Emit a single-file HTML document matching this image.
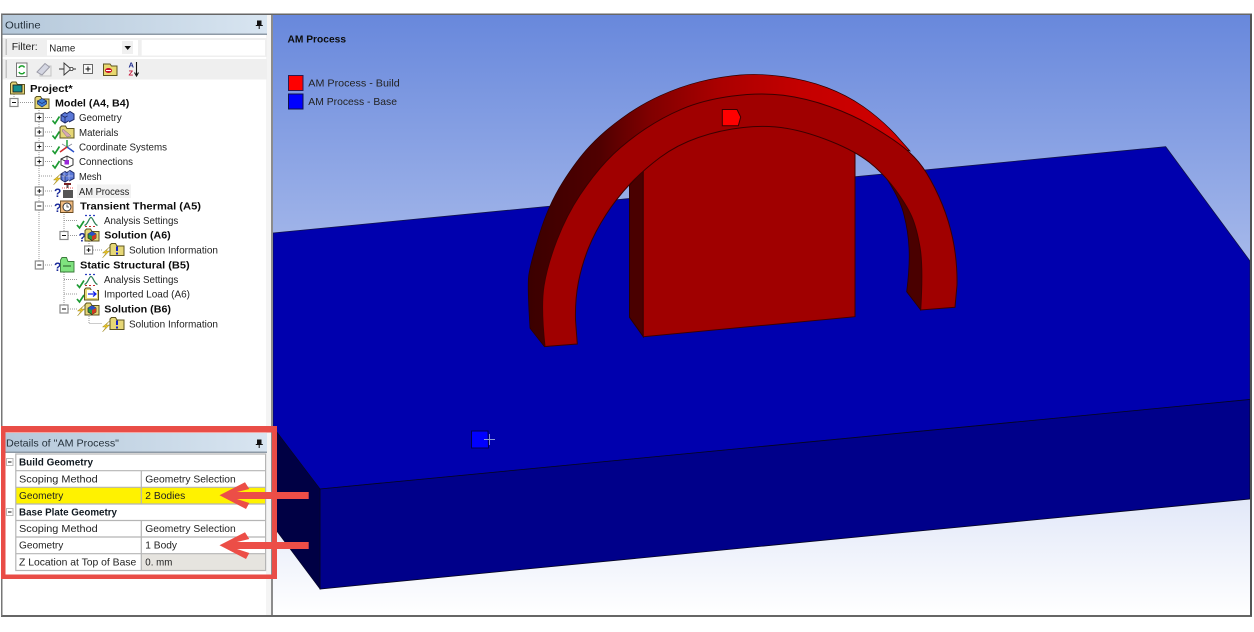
<!DOCTYPE html>
<html><head><meta charset="utf-8"><style>
html,body{margin:0;padding:0;background:#fff;width:1254px;height:632px;overflow:hidden}
svg{display:block;filter:blur(.3px)}
text{font-family:"Liberation Sans",sans-serif;font-size:10.5px;fill:#222}
.b{font-weight:bold;fill:#0c0c0c}
.q{font-weight:bold;font-size:12px;fill:#1a2a9a}
</style></head><body>
<svg width="1254" height="632" viewBox="0 0 1254 632" xmlns="http://www.w3.org/2000/svg">
<defs>
<linearGradient id="sky" gradientUnits="userSpaceOnUse" x1="0" y1="15" x2="0" y2="615"><stop offset="0" stop-color="#6888dc"/><stop offset="1" stop-color="#ffffff"/></linearGradient>
<linearGradient id="tb" x1="0" y1="0" x2="1" y2="0"><stop offset="0" stop-color="#b5c8da"/><stop offset="1" stop-color="#d8e5f1"/></linearGradient>
<linearGradient id="arc" gradientUnits="userSpaceOnUse" x1="530" y1="0" x2="900" y2="0"><stop offset="0" stop-color="#3c0000"/><stop offset=".19" stop-color="#500000"/><stop offset=".32" stop-color="#7f0000"/><stop offset=".51" stop-color="#aa0000"/><stop offset=".73" stop-color="#c40000"/><stop offset="1" stop-color="#d00000"/></linearGradient>
<g id="fold"><path d="M-7 -4.500V6H7V-3.500H0L-1.500 -6H-5.500Z" fill="#e6d777" stroke="#5c5420" stroke-width="1"/></g>
<g id="chk"><path d="M-3.500 0.500L-1 3.500L3.500 -3.500" fill="none" stroke="#1c9a32" stroke-width="1.700"/></g>
<g id="bolt"><path d="M3.500 -5L-3.500 1L0 1L-3.500 6L3.500 -1L0 -1Z" fill="#e9c52a" stroke="#8f7a10" stroke-width=".4"/></g>
<g id="cube"><path d="M-6 -2L-2 -4.500L2 -2V3.500L-2 6L-6 3.500Z" fill="#5b78d8" stroke="#1d2a66" stroke-width="1"/><path d="M-2 -.500V6M-6 -2L-2 .5L2 -2" fill="none" stroke="#1d2a66" stroke-width=".8"/><path d="M0 -3.500L3 -5.500L7 -3V2.500L2 5" fill="#5b78d8" stroke="#1d2a66" stroke-width="1"/></g>
<g id="plus"><rect x="-4" y="-4" width="8" height="8" fill="#fff" stroke="#8a8a8a" stroke-width="1.200"/><path d="M-2 0H2M0 -2V2" stroke="#111"/></g>
<g id="minus"><rect x="-4" y="-4" width="8" height="8" fill="#fff" stroke="#8a8a8a" stroke-width="1.200"/><path d="M-2 0H2" stroke="#111"/></g>
<g id="ana"><path d="M-6.500 5C-3 4 -2 -3 0 -3C2 -3 3 4 6.500 5" fill="none" stroke="#2d7f55" stroke-width="1.200"/><path d="M-6 -5H6" stroke="#2a3ec0" stroke-dasharray="2 2" stroke-width="1.200"/><path d="M-6 6H6" stroke="#c03030" stroke-dasharray="2 2"/></g>
<g id="sol"><use href="#fold"/><path d="M-4 -1L0 -3.500L4 -1V3L0 5.500L-4 3Z" fill="#2c9a3c" stroke="#222" stroke-width=".7"/><path d="M0 1L4 -1V3L0 5.500Z" fill="#d03a20"/><path d="M-4 -1L0 -3.500L4 -1L0 1Z" fill="#2a50c8"/></g>
<g id="info"><use href="#fold"/><path d="M0 -3V1.500M0 3V5" stroke="#1522c8" stroke-width="2"/></g>
</defs>

<rect width="1254" height="632" fill="#fff"/>
<!-- viewport -->
<rect x="272" y="14" width="979" height="602" fill="url(#sky)"/>
<path d="M273 233L1165.700 146.700L1250 261V399.500L320 489L273 427Z" fill="#0000ae" stroke="#10124a" stroke-width=".8"/>
<path d="M320 489L1250 399.500V499L320 589Z" fill="#00008a" stroke="#050520" stroke-width=".8"/>
<path d="M273 427L320 489V589L273 526Z" fill="#000044" stroke="#050520" stroke-width=".6"/>

<!-- right inner side of arch -->
<path d="M883 173Q900 198 904 215Q908.300 231.700 909 248Q910 265 906.700 291.700L920.700 310L930 250L900 180Z" fill="#4a0000" stroke="#2a0000" stroke-width=".8"/>
<!-- block -->
<path d="M629.500 185L643.300 170V336.700L629.500 317.300Z" fill="#4a0000" stroke="#2a0000" stroke-width="1"/>
<path d="M643.300 120H855V316.700L643.300 336.700Z" fill="#a00000" stroke="#3c0000" stroke-width="1"/>
<!-- arch side -->
<path d="M530 328.300Q527.300 286.700 528.650 275.850Q530 265 539.150 235Q548.300 205 562.500 182.500Q576.700 160 590 145.850Q603.300 131.700 621.650 118.350Q640 105 660 95.850Q680 86.700 700 81.700Q720 76.700 740 75Q760 73.300 783.350 76.650Q806.700 80 826.700 87.500Q846.700 95 863.350 106.650Q880 118.300 895 134L910 151L760 110L600 180L555 270L560 345L544.500 346.700Z" fill="url(#arc)" stroke="#2a0000" stroke-width=".7"/>
<!-- arch front -->
<path d="M545 346.500Q540.700 306.700 544 285.850Q547.300 265 557 240Q566.700 215 580 195Q593.300 175 606.650 160.850Q620 146.700 640 132.500Q660 118.300 681.650 109.150Q703.300 100 731.650 96.150Q760 92.300 783.350 95.300Q806.700 98.300 829.850 106.650Q853 115 869.850 125Q886.700 135 898.350 143.350Q910 151.700 918.350 161.700Q926.700 171.700 935 188.350Q943.300 205 948.300 221.500Q953.300 238 955.300 254Q957.300 270 957 285L955 307.300L920.700 310Q923.300 266.700 920 247.350Q916.700 228 911.700 216.500Q906.700 205 895 189.150Q883.300 173.300 869.150 162.150Q855 151 830.850 141.350Q806.700 131.700 786.700 128.350Q766.700 125 743.350 127.500Q720 130 698.350 137.500Q676.700 145 660 157.500Q643.300 170 630 184Q616.700 198 605.850 214.850Q595 231.700 588.350 248.350Q581.700 265 578.350 282.500Q575 300 575.500 320L577.300 344Z" fill="#a00000" stroke="#3c0000" stroke-width="1"/>
<!-- marker -->
<path d="M722.300 109.500H737L740.700 117L738.300 125.700H722.300Z" fill="#ff0000" stroke="#3c0000" stroke-width="1"/>
<path d="M471.500 431H488L488.500 448H471.500Z" fill="#0000ff" stroke="#000050" stroke-width="1"/>
<path d="M484 439.500H495M489.500 434V445" stroke="#8c9cd8" stroke-width=".9"/>

<text class="b" x="287.500" y="42.300" textLength="58.500" lengthAdjust="spacingAndGlyphs">AM Process</text>
<rect x="288.500" y="75.500" width="14.500" height="15" fill="#ff0000" stroke="#2b1a50"/>
<rect x="288.500" y="94" width="14.500" height="15" fill="#0000ff" stroke="#10124a"/>
<text x="308.300" y="86.700" textLength="91.400" lengthAdjust="spacingAndGlyphs">AM Process - Build</text>
<text x="308.300" y="105" textLength="88.700" lengthAdjust="spacingAndGlyphs">AM Process - Base</text>

<!-- left panel -->
<rect x="2" y="14" width="270" height="602" fill="#fff"/>
<rect x="266" y="15" width="5" height="600" fill="#f4f4f4"/>
<rect x="271" y="14" width="2" height="602" fill="#8c8c8c"/>
<rect x="2" y="15" width="265" height="19" fill="url(#tb)"/>
<rect x="2" y="33.500" width="265" height="1.500" fill="#8e9aa6"/>
<text x="5" y="28.300" textLength="35.700" lengthAdjust="spacingAndGlyphs" style="fill:#26323c">Outline</text>
<g fill="#111"><rect x="257" y="20.500" width="4.500" height="5"/><rect x="255.800" y="25" width="7" height="1"/><rect x="258.700" y="26" width="1" height="3"/></g>
<rect x="2" y="38" width="265" height="19" fill="#efefef"/>
<rect x="5.500" y="39" width="1.500" height="16" fill="#c4c4c4"/>
<text x="11.700" y="50" textLength="26" lengthAdjust="spacingAndGlyphs">Filter:</text>
<rect x="47" y="40" width="91" height="15.500" fill="#fff"/>
<rect x="122" y="41" width="11" height="13" fill="#f0f0f0"/>
<path d="M124.500 46H131L127.700 50Z" fill="#111"/>
<text x="49.300" y="51.700" textLength="26" lengthAdjust="spacingAndGlyphs">Name</text>
<rect x="141.700" y="40" width="123.300" height="15.500" fill="#fff"/>
<rect x="2" y="59" width="265" height="20.500" fill="#efefef"/>
<rect x="5.500" y="60" width="1.500" height="18" fill="#c4c4c4"/>
<!-- toolbar icons -->
<rect x="16.500" y="63" width="10.500" height="13.500" fill="#fff" stroke="#777"/>
<path d="M19 68A3 3 0 0 1 24.500 67.500M24.500 72A3 3 0 0 1 19 72" fill="none" stroke="#1fa12f" stroke-width="1.500"/>
<path d="M44 66H51V76H40V70Z" fill="#ededed" stroke="#c4c4c4"/><path d="M37 72L45 63.500L49.500 67L42 75Z" fill="#d4d6e2" stroke="#9a9aa6"/>
<path d="M64 63V75L71 69ZM59 69H64M71 69H76" fill="none" stroke="#333" stroke-width=".9"/><circle cx="71.500" cy="69" r="1.600" fill="#fff" stroke="#333" stroke-width=".8"/>
<rect x="83.500" y="64.500" width="9" height="9" fill="#f8f8f8" stroke="#666"/><path d="M85.500 69H90.500M88 66.500V71.500" stroke="#111"/>
<path d="M103.500 64H110L111.500 66H117V75.500H103.500Z" fill="#e8d86f" stroke="#5c5420"/><ellipse cx="108.500" cy="70.500" rx="3.500" ry="2.500" fill="#c8102e"/><path d="M106 70.500H111" stroke="#fff"/>
<text x="128.500" y="67.500" style="font-size:7.500px;font-weight:bold;fill:#1d2b8f">A</text>
<text x="128.500" y="75.500" style="font-size:7.500px;font-weight:bold;fill:#c81a3c">Z</text>
<path d="M136.500 62V75M134.500 72.500L136.500 76L138.500 72.500" fill="none" stroke="#111" stroke-width="1.100"/>

<!-- tree connectors -->
<g stroke="#999" stroke-width="1" stroke-dasharray="1 1" fill="none">
<path d="M14 94V98M18 102.500H34M39 110V265M43 117.500H53M43 132H53M43 146.500H53M43 161.500H53M39 176H53M43 191H53M43 206H53M43 265H53"/>
<path d="M64 212V235.500M64 220.500H77M68 235.500H77M64 272V309M64 279.500H77M64 294H77M68 309H77M89 241V250M93 250H102M89 316V323.500H102"/>
</g>
<use href="#fold" x="17.500" y="88"/><rect x="13" y="85" width="9" height="7" fill="#138f8f" stroke="#222" stroke-width=".9"/>
<use href="#minus" x="14" y="102.500"/>
<use href="#fold" x="42" y="102.500"/><path d="M37.500 101L42 98.500L46.500 101L42 103.500ZM37.500 101V104L42 107L46.500 104V101L42 103.500Z" fill="#3f7fd8" stroke="#1b2b66" stroke-width=".7"/>
<g id="rows">
<use href="#plus" x="39.300" y="117.500"/><use href="#plus" x="39.300" y="132"/><use href="#plus" x="39.300" y="146.500"/><use href="#plus" x="39.300" y="161.500"/><use href="#plus" x="39.300" y="191"/>
<use href="#chk" x="56" y="120"/><use href="#chk" x="56" y="135"/><use href="#chk" x="56" y="150"/><use href="#chk" x="56" y="164.500"/><use href="#bolt" x="57" y="179"/>
<use href="#cube" x="67" y="117"/>
<use href="#fold" x="67" y="132"/><path d="M63 129L69 134L71 136L67 137L62 131Z" fill="#d7a7b4" stroke="#777" stroke-width=".5"/>
<path d="M62 144L72 150M72 144L62 150" stroke="#889" stroke-width=".8"/><path d="M67 147V140" stroke="#22a040" stroke-width="1.500"/><path d="M67 147L74 152" stroke="#2a50c8" stroke-width="1.500"/><path d="M67 147L60 152" stroke="#d02c2c" stroke-width="1.500"/>
<path d="M61 159L67 156L73 159V165L67 168L61 165Z" fill="#fff" stroke="#333" stroke-width="1"/><rect x="64.500" y="160" width="4.500" height="4.500" fill="#9a28d8"/><path d="M67 156V160M61 159L65 161" fill="none" stroke="#333" stroke-width=".8"/>
<use href="#cube" x="67" y="176"/><path d="M61.500 176H73M64 171V181M69 171V181" stroke="#dde" stroke-width=".5"/>
<text class="q" x="54" y="197">?</text>
<rect x="64" y="183" width="7" height="2" fill="#7a2020"/><rect x="66.500" y="185" width="2" height="3" fill="#555"/><path d="M62 188H73" stroke="#ee5555" stroke-dasharray="1 1"/><path d="M63 190H73V198H63Z" fill="#555"/>
<rect x="77" y="184.500" width="54" height="13.500" fill="#f2f2f2"/>
</g>
<text class="b" x="30" y="92" textLength="42.700" lengthAdjust="spacingAndGlyphs">Project*</text>
<text class="b" x="55" y="106.500" textLength="74.300" lengthAdjust="spacingAndGlyphs">Model (A4, B4)</text>
<text x="79" y="121" textLength="42.700" lengthAdjust="spacingAndGlyphs">Geometry</text>
<text x="79" y="136" textLength="39.300" lengthAdjust="spacingAndGlyphs">Materials</text>
<text x="79" y="150.500" textLength="88" lengthAdjust="spacingAndGlyphs">Coordinate Systems</text>
<text x="79" y="165" textLength="54" lengthAdjust="spacingAndGlyphs">Connections</text>
<text x="79" y="180" textLength="22.700" lengthAdjust="spacingAndGlyphs">Mesh</text>
<text x="79" y="195" textLength="50.300" lengthAdjust="spacingAndGlyphs">AM Process</text>

<use href="#minus" x="39.300" y="206"/>
<text class="q" x="54" y="212">?</text>
<path d="M60.500 201H73V212.500H60.500Z" fill="#f0bb80" stroke="#6a4a20" stroke-width=".9"/><circle cx="67" cy="207" r="4" fill="#fff" stroke="#333"/><path d="M67 204.500V207H69" fill="none" stroke="#333" stroke-width=".8"/>
<text class="b" x="80" y="209.500" textLength="121" lengthAdjust="spacingAndGlyphs">Transient Thermal (A5)</text>
<use href="#chk" x="80.500" y="224.500"/><use href="#ana" x="91" y="220.500"/>
<text x="104" y="224" textLength="74.300" lengthAdjust="spacingAndGlyphs">Analysis Settings</text>
<use href="#minus" x="64" y="235.500"/>
<text class="q" x="78.500" y="241.500">?</text>
<use href="#sol" x="92" y="235"/>
<text class="b" x="104.300" y="238.700" textLength="66.400" lengthAdjust="spacingAndGlyphs">Solution (A6)</text>
<use href="#plus" x="88.600" y="250"/>
<use href="#bolt" x="106" y="252"/><use href="#info" x="117" y="249.500"/>
<text x="129" y="253.300" textLength="89" lengthAdjust="spacingAndGlyphs">Solution Information</text>

<use href="#minus" x="39.300" y="265"/>
<text class="q" x="54" y="271">?</text>
<path d="M60.500 260V272H74V261.500H68L66.500 257.500H62Z" fill="#7fe27f" stroke="#3a7a3a" stroke-width=".9"/><path d="M63 266H71" stroke="#2a5a2a" stroke-width="1"/>
<text class="b" x="80" y="268.300" textLength="109.700" lengthAdjust="spacingAndGlyphs">Static Structural (B5)</text>
<use href="#chk" x="80.500" y="284"/><use href="#ana" x="91" y="279.500"/>
<text x="104" y="283" textLength="74.300" lengthAdjust="spacingAndGlyphs">Analysis Settings</text>
<use href="#chk" x="80.500" y="298.500"/><use href="#fold" x="91.500" y="294"/><rect x="87" y="290" width="10" height="8" fill="#fff"/><path d="M88 294H95M93 291.500L96 294L93 296.500" fill="none" stroke="#1522e8" stroke-width="1.200"/>
<text x="104" y="297.700" textLength="86" lengthAdjust="spacingAndGlyphs">Imported Load (A6)</text>
<use href="#minus" x="64" y="309"/>
<use href="#bolt" x="81" y="310"/><use href="#sol" x="92" y="309"/>
<text class="b" x="104.300" y="312.300" textLength="66.700" lengthAdjust="spacingAndGlyphs">Solution (B6)</text>
<use href="#bolt" x="106" y="326"/><use href="#info" x="117" y="323.500"/>
<text x="129" y="327.300" textLength="89" lengthAdjust="spacingAndGlyphs">Solution Information</text>

<!-- details -->
<rect x="2" y="433" width="265" height="18.500" fill="url(#tb)"/>
<rect x="2" y="451.500" width="265" height="1.500" fill="#8e9aa6"/>
<text x="6" y="446.700" textLength="113" lengthAdjust="spacingAndGlyphs" style="fill:#26323c">Details of "AM Process"</text>
<g fill="#111"><rect x="257" y="439.500" width="4.500" height="5"/><rect x="255.800" y="444" width="7" height="1"/><rect x="258.700" y="445" width="1" height="3"/></g>
<rect x="6" y="453" width="260" height="118" fill="#fff"/>
<rect x="16" y="487.300" width="249.500" height="16.700" fill="#fff200"/>
<rect x="141.500" y="553.700" width="124" height="16.700" fill="#e6e4df"/>
<g stroke="#b5b5b5" stroke-width="1.200" fill="none">
<rect x="15.800" y="454" width="249.800" height="116.500"/>
<path d="M15.800 470.700H265.600M15.800 487.300H265.600M15.800 504H265.600M15.800 520.500H265.600M15.800 537H265.600M15.800 553.700H265.600M141.300 470.700V504M141.300 520.500V570.500"/>
</g>
<rect x="6.500" y="458.500" width="6.500" height="7" fill="#fff" stroke="#bbb"/><path d="M8 462H11.500" stroke="#111"/>
<rect x="6.500" y="508.500" width="6.500" height="7" fill="#fff" stroke="#bbb"/><path d="M8 512H11.500" stroke="#111"/>
<text class="b" x="19" y="465.700" textLength="74" lengthAdjust="spacingAndGlyphs" style="fill:#111a22">Build Geometry</text>
<text x="19" y="482.300" textLength="78.700" lengthAdjust="spacingAndGlyphs">Scoping Method</text>
<text x="145.300" y="482.300" textLength="90.400" lengthAdjust="spacingAndGlyphs">Geometry Selection</text>
<text x="19" y="499" textLength="44.300" lengthAdjust="spacingAndGlyphs">Geometry</text>
<text x="145.300" y="499" textLength="40" lengthAdjust="spacingAndGlyphs">2 Bodies</text>
<text class="b" x="19" y="515.300" textLength="98" lengthAdjust="spacingAndGlyphs" style="fill:#111a22">Base Plate Geometry</text>
<text x="19" y="532" textLength="78.700" lengthAdjust="spacingAndGlyphs">Scoping Method</text>
<text x="145.300" y="532" textLength="90.400" lengthAdjust="spacingAndGlyphs">Geometry Selection</text>
<text x="19" y="548.700" textLength="44.300" lengthAdjust="spacingAndGlyphs">Geometry</text>
<text x="145.300" y="548.700" textLength="31.700" lengthAdjust="spacingAndGlyphs">1 Body</text>
<text x="19" y="565.300" textLength="117.300" lengthAdjust="spacingAndGlyphs">Z Location at Top of Base</text>
<text x="145.300" y="565.300" textLength="27" lengthAdjust="spacingAndGlyphs">0. mm</text>

<!-- frame -->
<rect x="1" y="13.500" width="1251" height="1.500" fill="#666"/>
<rect x="1" y="615" width="1251" height="2" fill="#666"/>
<rect x="1" y="14" width="1.500" height="602" fill="#777"/>
<rect x="1250" y="14" width="2" height="602" fill="#555"/>

<!-- annotation -->
<path d="M1 426H277V579H1ZM5.500 432.500V574.500H272V432.500Z" fill="#e94d47" fill-rule="evenodd"/>
<g fill="#ec4e47">
<path d="M219.500 495.300L245 482.300L249.300 489L237 492H308.700V499H237L249.300 503L246 509Z"/>
<path d="M219.500 545.300L245 532.300L249.300 539L237 542H308.700V549H237L249.300 553L246 559Z"/>
</g>
</svg>
</body></html>
